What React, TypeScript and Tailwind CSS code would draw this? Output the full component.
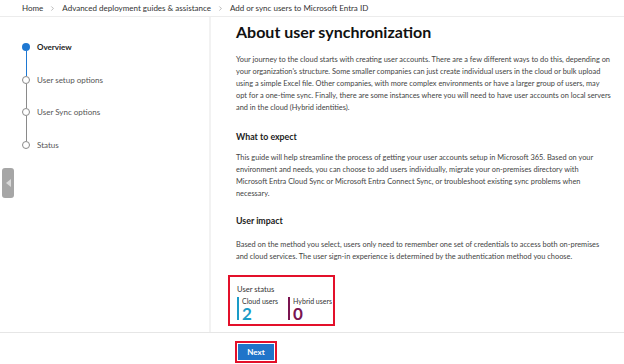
import { ChevronRight } from 'lucide-react';

const steps = [
  { label: 'Overview', active: true },
  { label: 'User setup options', active: false },
  { label: 'User Sync options', active: false },
  { label: 'Status', active: false },
];

const intro = [
  'Your journey to the cloud starts with creating user accounts. There are a few different ways to do this, depending on',
  "your organization's structure. Some smaller companies can just create individual users in the cloud or bulk upload",
  'using a simple Excel file. Other companies, with more complex environments or have a larger group of users, may',
  'opt for a one-time sync. Finally, there are some instances where you will need to have user accounts on local servers',
  'and in the cloud (Hybrid identities).',
];

const expect = [
  'This guide will help streamline the process of getting your user accounts setup in Microsoft 365. Based on your',
  'environment and needs, you can choose to add users individually, migrate your on-premises directory with',
  'Microsoft Entra Cloud Sync or Microsoft Entra Connect Sync, or troubleshoot existing sync problems when',
  'necessary.',
];

const impact = [
  'Based on the method you select, users only need to remember one set of credentials to access both on-premises',
  'and cloud services. The user sign-in experience is determined by the authentication method you choose.',
];

// Wizard step list on the left
function StepList() {
  return (
    <div className="pt-[26px] pl-[22px]">
      {steps.map((step, i) => (
        <div key={step.label} className="flex flex-col">
          <div className="flex items-center gap-[7px] h-[8px]">
            <span
              className={
                step.active
                  ? 'w-[8px] h-[8px] rounded-full bg-[#1e78d2]'
                  : 'w-[8px] h-[8px] rounded-full border border-[#8a8a8a] bg-white'
              }
            />
            <span
              className={
                step.active
                  ? 'text-[8px] font-bold text-[#222]'
                  : 'text-[8px] text-[#555]'
              }
            >
              {step.label}
            </span>
          </div>
          {i < steps.length - 1 && (
            <div
              className={
                step.active
                  ? 'ml-[3.5px] w-px h-[24.5px] bg-[#1e78d2]'
                  : 'ml-[3.5px] w-px h-[24.5px] bg-[#8a8a8a]'
              }
            />
          )}
        </div>
      ))}
    </div>
  );
}

function Para({ lines, className }: { lines: string[]; className: string }) {
  return (
    <div className={`text-[7.4px] leading-[12px] text-[#444] ${className}`}>
      {lines.map((l) => (
        <div key={l} className="whitespace-nowrap">
          {l}
        </div>
      ))}
    </div>
  );
}

function StatCol({ label, value, bar, color }: { label: string; value: string; bar: string; color: string }) {
  return (
    <div className="flex gap-[3px] shrink-0">
      <div className={`w-[2px] h-[23px] ${bar}`} />
      <div className="flex flex-col">
        <span className="text-[7px] leading-[9px] text-[#333] whitespace-nowrap">{label}</span>
        <span className={`text-[17px] leading-[15px] font-bold ${color}`}>{value}</span>
      </div>
    </div>
  );
}

export default function App() {
  return (
    <div
      className="w-[624px] h-[364px] bg-white flex flex-col overflow-hidden text-[#444]"
      style={{ fontFamily: 'Lato, "Noto Sans", sans-serif' }}
    >
      {/* Breadcrumb */}
      <div className="h-[17px] shrink-0 border-b border-[#ececec] flex items-center pl-[22px] gap-[6px] text-[8px] text-[#333]">
        <span>Home</span>
        <ChevronRight size={7} strokeWidth={1.5} className="text-[#666]" />
        <span>Advanced deployment guides &amp; assistance</span>
        <ChevronRight size={7} strokeWidth={1.5} className="text-[#666]" />
        <span>Add or sync users to Microsoft Entra ID</span>
      </div>

      <div className="flex h-[316px] border-b border-[#e6e6e6]">
        {/* Left nav */}
        <div className="w-[211px] shrink-0 border-r-2 border-[#f2f2f2] flex flex-col">
          <StepList />
          <div className="mt-[19px] ml-[2px] w-[12px] h-[30px] rounded-[3px] bg-[#a6a6a6] flex items-center justify-center">
            <span className="w-0 h-0 border-y-[4px] border-y-transparent border-r-[5px] border-r-[#d9d9d9]" />
          </div>
        </div>

        {/* Content */}
        <div className="flex-1 pl-[25px] pt-[3px]">
          <h1 className="text-[16px] leading-[24px] font-bold text-[#111]">About user synchronization</h1>
          <Para lines={intro} className="mt-[10px]" />

          <h2 className="mt-[17px] text-[8.8px] leading-[12px] font-bold text-[#222]">What to expect</h2>
          <Para lines={expect} className="mt-[9px]" />

          <h2 className="mt-[15px] text-[8.8px] leading-[12px] font-bold text-[#222]">User impact</h2>
          <Para lines={impact} className="mt-[12px]" />

          {/* User status */}
          <div className="mt-[12px] -ml-[8px] w-[107px] h-[51px] border-2 border-[#e3102a] pl-[7px] pt-[7px]">
            <div className="text-[7.6px] leading-[10px] text-[#333]">User status</div>
            <div className="flex gap-[10px] mt-[3px]">
              <StatCol label="Cloud users" value="2" bar="bg-[#1a9bc7]" color="text-[#1a9bc7]" />
              <StatCol label="Hybrid users" value="0" bar="bg-[#7a1450]" color="text-[#7a1450]" />
            </div>
          </div>
        </div>
      </div>

      {/* Footer */}
      <div className="flex-1 pl-[235px] pt-[8px]">
        <div className="w-[42px] h-[22px] border-2 border-[#e3102a] p-[1px]">
          <button className="w-full h-full bg-[#1f74c9] text-white text-[8px] font-bold flex items-center justify-center">
            Next
          </button>
        </div>
      </div>
    </div>
  );
}
